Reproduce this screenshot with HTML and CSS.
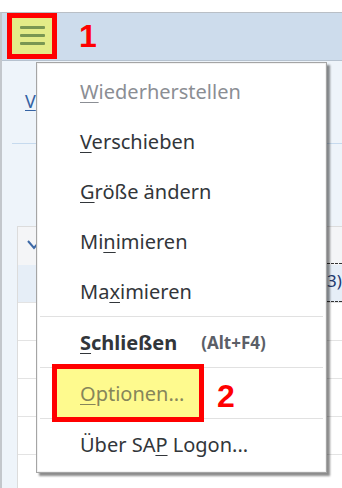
FILE: index.html
```html
<!DOCTYPE html>
<html lang="de">
<head>
  <meta charset="UTF-8">
  <meta name="viewport" content="width=device-width, initial-scale=1.0">
  <title>SAP Logon Systemmenü</title>
  <link rel="stylesheet" href="styles.css">
</head>
<body>
  <div class="screen">
    <div class="window">
      <div class="titlebar">
        <div class="menu-btn">
          <span></span><span></span><span></span>
        </div>
        <div class="step">1</div>
      </div>
      <div class="content">
        <div class="link">V</div>
        <div class="divider"></div>
        <div class="table">
          <div class="thead">
            <svg class="chevron" width="14" height="10" viewBox="0 0 14 10">
              <polyline points="1,1 7,8 13,1" fill="none" stroke="#3d69a6" stroke-width="2"/>
            </svg>
          </div>
          <div class="row selected">
            <div class="focus-cell">3)</div>
          </div>
          <div class="row"></div>
          <div class="row"></div>
          <div class="row"></div>
          <div class="row"></div>
          <div class="row"></div>
        </div>
      </div>
    </div>

    <div class="menu">
      <div class="item disabled"><span><u>W</u>iederherstellen</span></div>
      <div class="item"><span><u>V</u>erschieben</span></div>
      <div class="item"><span><u>G</u>röße ändern</span></div>
      <div class="item"><span>Mi<u>n</u>imieren</span></div>
      <div class="item"><span>Ma<u>x</u>imieren</span></div>
      <div class="sep"></div>
      <div class="item"><span class="bold"><u>S</u>chließen</span><span class="shortcut">(Alt+F4)</span></div>
      <div class="sep"></div>
      <div class="item option">
        <div class="mark"></div>
        <span class="label"><u>O</u>ptionen...</span>
        <div class="step step-2">2</div>
      </div>
      <div class="sep"></div>
      <div class="item"><span>Über SA<u>P</u> Logon...</span></div>
    </div>
  </div>
</body>
</html>
```

FILE: styles.css
```css
body {
  margin: 0;
  background: #fff;
  font-family: "Noto Sans", sans-serif;
  color: #32363a;
}

.screen {
  position: relative;
  width: 342px;
  height: 488px;
  overflow: hidden;
  padding-top: 12px;
  box-sizing: border-box;
}

.window {
  height: 476px;
  border-top: 1px solid #b9bfc6;
  border-left: 2px solid #c3c7cc;
  display: flex;
  flex-direction: column;
}

.titlebar {
  height: 47px;
  flex-shrink: 0;
  background: #cddcec;
  border-bottom: 1px solid #b6c2cf;
  display: flex;
  align-items: flex-start;
  padding-left: 5px;
}

.menu-btn {
  width: 50px;
  height: 46px;
  box-sizing: border-box;
  border: 5px solid #ff0000;
  background: #e4eb88;
  display: flex;
  flex-direction: column;
  align-items: center;
  justify-content: center;
  gap: 5px;
  padding-bottom: 2px;
}

.menu-btn span {
  display: block;
  width: 25px;
  height: 3px;
  border-radius: 1px;
  background: #7a9652;
}

.step {
  font-family: "Liberation Sans", Arial, sans-serif;
  font-weight: bold;
  font-size: 32px;
  line-height: 46px;
  color: #ff0000;
  margin-left: 22px;
}

.content {
  flex: 1;
  background: #eef4fa;
}

.link {
  margin: 28px 0 0 23px;
  font-size: 18px;
  line-height: 24px;
  color: #3462a3;
  text-decoration: underline;
  text-underline-offset: 2px;
}

.divider {
  height: 1px;
  margin: 30px 0 0 10px;
  background: #c6daee;
}

.table {
  margin: 82px 0 0 15px;
  border-top: 1px solid #dcdcdc;
  border-left: 1px solid #dcdcdc;
  background: #fff;
  height: 262px;
}

.thead {
  height: 38px;
  background: #f4f5f7;
  padding: 13px 0 0 9px;
  box-sizing: border-box;
}

.chevron {
  display: block;
}

.row {
  height: 37px;
  border-bottom: 1px solid #e3e3e3;
  display: flex;
  justify-content: flex-end;
  align-items: stretch;
}

.row.selected {
  background: #e6eef7;
}

.focus-cell {
  width: 15px;
  border-top: 1px dashed #333;
  border-bottom: 1px dashed #333;
  font-size: 17px;
  line-height: 33px;
  color: #223a70;
  white-space: nowrap;
  margin-top: -2px;
}

.menu {
  position: absolute;
  left: 36px;
  top: 62px;
  width: 291px;
  box-sizing: border-box;
  background: #fff;
  border: 1px solid #a5a5a5;
  box-shadow: inset 0 0 0 1px #f2f2f2, 3px 3px 2px rgba(0, 0, 0, 0.45);
  padding: 3px 0 3px;
  z-index: 2;
}

.item {
  position: relative;
  height: 50px;
  padding-left: 43px;
  display: flex;
  align-items: center;
  font-size: 20px;
  color: #32363a;
  white-space: nowrap;
}

.item u {
  text-decoration-thickness: 1px;
  text-underline-offset: 3px;
}

.item.disabled {
  color: #8b8e94;
}

.bold {
  font-weight: bold;
}

.shortcut {
  margin-left: 24px;
  font-size: 17px;
  font-weight: bold;
  color: #5b5f68;
}

.sep {
  height: 1px;
  margin: 0 3px;
  background: #e1e1e1;
}

.option .mark {
  position: absolute;
  left: 15px;
  top: -4px;
  width: 152px;
  height: 58px;
  box-sizing: border-box;
  border: 5px solid #ff0000;
  background: #fefa8e;
}

.option .label {
  position: relative;
  color: #86865a;
}

.step-2 {
  position: absolute;
  left: 180px;
  top: 5px;
  margin: 0;
}
```
